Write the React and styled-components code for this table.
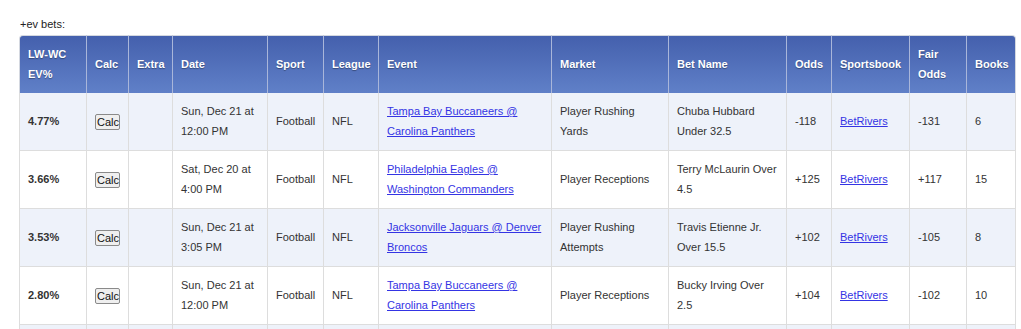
import React from "react";
import styled, { createGlobalStyle } from "styled-components";

const Global = createGlobalStyle`
  html, body { margin: 0; padding: 0; background: #fff; }
  body { font-family: "Liberation Sans", Arial, sans-serif; }
`;

const Page = styled.div`
  padding: 18px 5px 0 19px;
  font-family: "Liberation Sans", Arial, sans-serif;
  font-size: 11px;
  color: #222;
`;

const Caption = styled.div`
  line-height: 13px;
  margin: 0 0 4px 1px;
`;

const Table = styled.table`
  width: 997px;
  table-layout: fixed;
  border-collapse: separate;
  border-spacing: 0;
  font-size: 11px;
  line-height: 20px;
  color: #333;
`;

const HeadCell = styled.th`
  text-align: left;
  font-weight: bold;
  color: #fff;
  text-shadow: 0 1px 1px rgba(0, 0, 0, 0.35);
  padding: 8px 8px 9px 8px;
  background: linear-gradient(#4460ad, #6080c8);
  border-top: 1px solid #d4d8e0;
  border-left: 1px solid #a9b6da;
  vertical-align: middle;
  &:first-child {
    border-left: 1px solid #d4d8e0;
    border-top-left-radius: 4px;
  }
  &:last-child {
    border-right: 1px solid #d4d8e0;
    border-top-right-radius: 4px;
  }
`;

const Row = styled.tr`
  background: ${(p) => (p.$striped ? "#eef2fa" : "#ffffff")};
`;

const Cell = styled.td`
  padding: 8px 8px 9px 8px;
  height: 40px;
  border-bottom: 1px solid #dddddd;
  border-left: 1px solid #dddddd;
  vertical-align: middle;
  font-weight: ${(p) => (p.$bold ? "bold" : "normal")};
  &:last-child {
    border-right: 1px solid #dddddd;
  }
`;

const CalcButton = styled.button`
  font-family: "Liberation Sans", Arial, sans-serif;
  font-size: 11px;
  line-height: 12px;
  padding: 1px 1px;
  height: 16px;
  width: 25px;
  color: #111;
  background: #efefef;
  border: 1px solid #8a8a8a;
  border-radius: 2px;
  vertical-align: middle;
`;

const Link = styled.a`
  color: #3434e4;
  text-decoration: underline;
`;

const widths = [67, 42, 44, 95, 56, 55, 173, 117, 118, 45, 78, 57, 50];
const headers = [
  "LW-WC EV%",
  "Calc",
  "Extra",
  "Date",
  "Sport",
  "League",
  "Event",
  "Market",
  "Bet Name",
  "Odds",
  "Sportsbook",
  "Fair Odds",
  "Books",
];

const rows = [
  {
    ev: "4.77%",
    date: "Sun, Dec 21 at 12:00 PM",
    event: "Tampa Bay Buccaneers @ Carolina Panthers",
    market: "Player Rushing Yards",
    bet: "Chuba Hubbard Under 32.5",
    odds: "-118",
    fair: "-131",
    books: "6",
  },
  {
    ev: "3.66%",
    date: "Sat, Dec 20 at 4:00 PM",
    event: "Philadelphia Eagles @ Washington Commanders",
    market: "Player Receptions",
    bet: "Terry McLaurin Over 4.5",
    odds: "+125",
    fair: "+117",
    books: "15",
  },
  {
    ev: "3.53%",
    date: "Sun, Dec 21 at 3:05 PM",
    event: "Jacksonville Jaguars @ Denver Broncos",
    market: "Player Rushing Attempts",
    bet: "Travis Etienne Jr. Over 15.5",
    odds: "+102",
    fair: "-105",
    books: "8",
  },
  {
    ev: "2.80%",
    date: "Sun, Dec 21 at 12:00 PM",
    event: "Tampa Bay Buccaneers @ Carolina Panthers",
    market: "Player Receptions",
    bet: "Bucky Irving Over 2.5",
    odds: "+104",
    fair: "-102",
    books: "10",
  },
];

export default function App() {
  return (
    <>
      <Global />
      <Page>
        <Caption>+ev bets:</Caption>
        <Table>
          <colgroup>
            {widths.map((w, i) => (
              <col key={i} style={{ width: w }} />
            ))}
          </colgroup>
          <thead>
            <tr>
              {headers.map((h) => (
                <HeadCell key={h}>{h}</HeadCell>
              ))}
            </tr>
          </thead>
          <tbody>
            {rows.map((r, i) => (
              <Row key={i} $striped={i % 2 === 0}>
                <Cell $bold>{r.ev}</Cell>
                <Cell>
                  <CalcButton>Calc</CalcButton>
                </Cell>
                <Cell></Cell>
                <Cell>{r.date}</Cell>
                <Cell>Football</Cell>
                <Cell>NFL</Cell>
                <Cell>
                  <Link href="#">{r.event}</Link>
                </Cell>
                <Cell>{r.market}</Cell>
                <Cell>{r.bet}</Cell>
                <Cell>{r.odds}</Cell>
                <Cell>
                  <Link href="#">BetRivers</Link>
                </Cell>
                <Cell>{r.fair}</Cell>
                <Cell>{r.books}</Cell>
              </Row>
            ))}
            <Row $striped>
              {widths.map((_, i) => (
                <Cell key={i}></Cell>
              ))}
            </Row>
          </tbody>
        </Table>
      </Page>
    </>
  );
}
